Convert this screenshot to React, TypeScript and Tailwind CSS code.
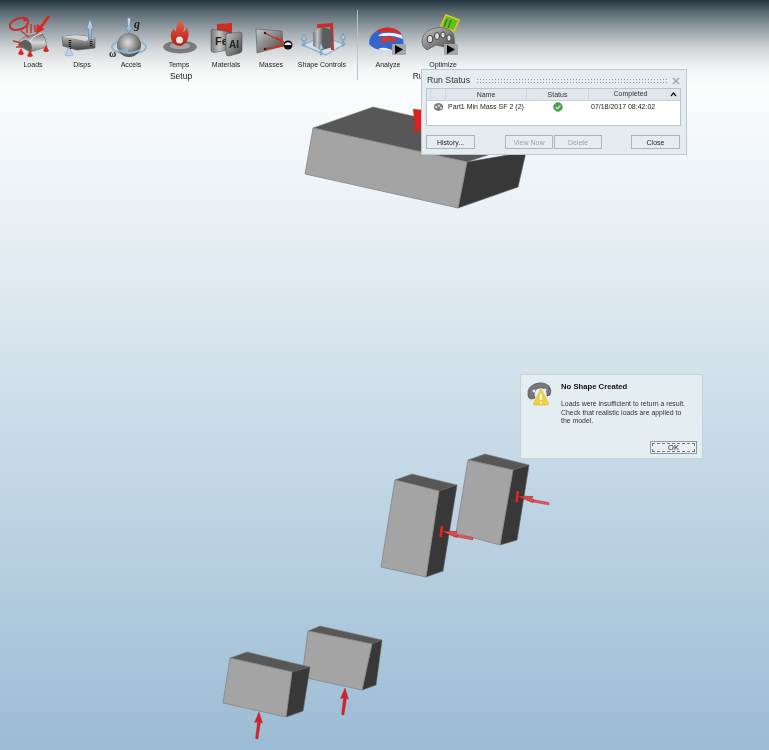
const font = "font-['Liberation_Sans',Arial,sans-serif]";

function Defs() {
  return (
    <svg width="0" height="0" className="absolute">
      <defs>
        <linearGradient id="steel" x1="0" y1="0" x2="1" y2="1">
          <stop offset="0" stopColor="#c6c6c6" />
          <stop offset="0.5" stopColor="#858585" />
          <stop offset="1" stopColor="#454545" />
        </linearGradient>
        <linearGradient id="plate" x1="0" y1="0" x2="1" y2="0">
          <stop offset="0" stopColor="#777777" />
          <stop offset="0.45" stopColor="#c2c2c2" />
          <stop offset="1" stopColor="#5c5c5c" />
        </linearGradient>
        <linearGradient id="dome" x1="0" y1="0" x2="0" y2="1">
          <stop offset="0" stopColor="#6f6f6f" />
          <stop offset="0.5" stopColor="#d6d6d6" />
          <stop offset="1" stopColor="#7c7c7c" />
        </linearGradient>
        <linearGradient id="block" x1="0" y1="0" x2="0" y2="1">
          <stop offset="0" stopColor="#c4c4c4" />
          <stop offset="0.4" stopColor="#8e8e8e" />
          <stop offset="1" stopColor="#3f3f3f" />
        </linearGradient>
        <radialGradient id="ball" cx="0.45" cy="0.4" r="0.7">
          <stop offset="0" stopColor="#e2e2e2" />
          <stop offset="0.5" stopColor="#8e8e8e" />
          <stop offset="1" stopColor="#333333" />
        </radialGradient>
        <linearGradient id="flame" x1="0" y1="0" x2="0" y2="1">
          <stop offset="0" stopColor="#e8604a" />
          <stop offset="1" stopColor="#b81a12" />
        </linearGradient>
        <linearGradient id="sky" x1="0" y1="0" x2="0" y2="1">
          <stop offset="0" stopColor="#cfe0ee" />
          <stop offset="1" stopColor="#7fa6c6" />
        </linearGradient>
      </defs>
    </svg>
  );
}

function Cone({ x, y }: { x: number; y: number }) {
  return <path d={`M${x} ${y}l-3 6q3 2 6 0z`} fill="#d8281f" />;
}

function LoadsIcon() {
  return (
    <svg width="48" height="46" viewBox="9 13 48 46">
      <path d="M18 45q1-6 6-8l18-4q4 5 5 14l-17 5z" fill="url(#dome)" stroke="#5e5e5e" strokeWidth="0.500" />
      <path d="M18 45q6-8 12-3 3 4 1 10z" fill="#5f5f5f" />
      <path d="M30 42q2-6 12-9" fill="none" stroke="#efefef" strokeWidth="1" />
      <ellipse cx="19" cy="24" rx="9.500" ry="5.500" fill="none" stroke="#c92c26" strokeWidth="2" transform="rotate(-18 19 24)" />
      <path d="M29 19l-6-3 1 6z" fill="#c92c26" />
      <path d="M48 15l2 2-8 11 3 1-9 5 1-10 3 2z" fill="#d8281f" />
      <g stroke="#cb332b" strokeWidth="1.500">
        <path d="M27 23v10M31 24v9M35 25v7M21 31l8 6M13 41l9 2M16 47l6 0" />
      </g>
      <Cone x={21} y={48} />
      <Cone x={30} y={50} />
      <Cone x={46} y={45} />
    </svg>
  );
}

function DispsIcon() {
  return (
    <svg width="50" height="46" viewBox="57 13 50 46">
      <path d="M62 37q14-4 33 1v10l-18 2-14-4z" fill="url(#block)" stroke="#4a4a4a" strokeWidth="0.500" />
      <path d="M62 37q14-4 33 1l-10 3q-10-3-23-4z" fill="#d6d6d6" />
      <path d="M70 40v9M91 39v7" stroke="#111" strokeWidth="2.500" strokeDasharray="1 1" />
      <path d="M90 19l-3.500 10h2v11h3V29h2z" fill="url(#sky)" stroke="#5a7f9d" strokeWidth="0.600" />
      <path d="M69 47l-4 8q4 2 8 0z" fill="#bcd4e8" stroke="#7fa3c4" strokeWidth="0.600" />
    </svg>
  );
}

function AccelsIcon() {
  return (
    <svg width="48" height="46" viewBox="107 13 48 46">
      <ellipse cx="129" cy="47" rx="17" ry="7" fill="none" stroke="#8fb4d0" strokeWidth="1.800" />
      <circle cx="129" cy="45" r="12" fill="url(#ball)" />
      <path d="M118 50q11 6 22 0" fill="none" stroke="#8fb4d0" strokeWidth="1.800" />
      <path d="M120 50l8-2v4z" fill="#8fb4d0" />
      <path d="M127.500 18v9h-2l3.500 7 3.500-7h-2v-9z" fill="url(#sky)" stroke="#5a7f9d" strokeWidth="0.500" />
      <text x="134" y="28" className="font-['Liberation_Serif',serif] italic font-bold" fontSize="12" fill="#222">g</text>
      <text x="109" y="57" className="font-['Liberation_Serif',serif] font-bold" fontSize="10" fill="#222">ω</text>
    </svg>
  );
}

function TempsIcon() {
  return (
    <svg width="48" height="46" viewBox="155 13 48 46">
      <ellipse cx="180" cy="47" rx="16.500" ry="6" fill="#7c7c7c" stroke="#5e5e5e" strokeWidth="0.600" />
      <ellipse cx="180" cy="46" rx="11" ry="3.800" fill="#a4a4a4" stroke="#5e5e5e" strokeWidth="0.600" />
      <path d="M180 20q6 6 3 12 3-1 3-5 4 5 2 11-1 6-8 8-8-1-9-8-1-6 3-10 0 3 2 3 0-6 4-11z" fill="url(#flame)" />
      <ellipse cx="179.500" cy="40" rx="3.500" ry="3.500" fill="#e4e4e4" />
    </svg>
  );
}

function MaterialsIcon() {
  return (
    <svg width="46" height="46" viewBox="203 13 46 46">
      <path d="M217 24l15-1v13h-15z" fill="#cc2c24" />
      <path d="M211 31q0-2 2-1.500l15 2q2 .5 2 2v16l-16 3q-3 0-3-3z" fill="url(#plate)" stroke="#444" strokeWidth="0.500" />
      <text x="215" y="45" className="font-['Liberation_Sans',sans-serif] font-bold" fontSize="11" fill="#222">Fe</text>
      <path d="M226 36q0-2 2-2.500l12-1.500q2 0 2 2v16q0 2-2 3l-11 3q-3 0-3-3z" fill="url(#steel)" stroke="#444" strokeWidth="0.500" />
      <text x="229" y="48" className="font-['Liberation_Sans',sans-serif] font-bold" fontSize="10" fill="#222">Al</text>
    </svg>
  );
}

function MassesIcon() {
  return (
    <svg width="44" height="46" viewBox="249 13 44 46">
      <path d="M256 29l26 2 1 15-26 7z" fill="url(#steel)" stroke="#444" strokeWidth="0.500" />
      <path d="M265 33l23 12M276 37l12 8M265 49l23-4M277 46l11-1" stroke="#cf2d25" strokeWidth="1.300" fill="none" />
      <circle cx="265" cy="33" r="1.200" fill="#222" />
      <circle cx="265" cy="49" r="1.200" fill="#222" />
      <circle cx="288" cy="45" r="4.500" fill="#111" />
      <path d="M284.500 45a3.600 3.600 0 0 1 7 0z" fill="#f0f0f0" />
    </svg>
  );
}

function ShapeControlsIcon() {
  return (
    <svg width="58" height="46" viewBox="293 13 58 46">
      <path d="M302 45l20-8 23 7-19 11z" fill="#d4dfe8" stroke="#8fb4d0" strokeWidth="1.400" />
      <path d="M317 24l16-1 1 27h-3l-1-23-13 1z" fill="#cc2c24" />
      <path d="M313 32l10-5v22l-1 1-9-4z" fill="url(#plate)" />
      <path d="M323 27l9 3 1 17-11 3z" fill="#5c5c5c" />
      <path d="M304 34l-2.500 6h1.700v6h1.600v-6h1.700zM343 33l-2.500 6h1.700v7h1.600v-7h1.700zM321 43l-2.500 6h1.700v6h1.600v-6h1.700z" fill="#a9c6dd" stroke="#557c9b" strokeWidth="0.500" />
    </svg>
  );
}

function PlayBadge({ x, y }: { x: number; y: number }) {
  return (
    <g>
      <rect x={x} y={y} width="14" height="11" rx="1" fill="#a6a6a6" />
      <path d={`M${x + 3} ${y + 1}l8 4.500-8 4.500z`} fill="#000" />
    </g>
  );
}

function AnalyzeIcon() {
  return (
    <svg width="48" height="46" viewBox="364 13 48 46">
      <path d="M369 44q0-8 6-12 8-6 17-4 9 2 11 10 1 5 0 9l-9 3h-13q-8-1-12-6z" fill="#3466cc" />
      <path d="M376 31q8-5 16-3 7 1.500 9.500 7-11-4-17-3-5 .5-8.500-1z" fill="#d92a22" />
      <path d="M378 36q3-3 6-3 9-1 17.500 2l1.500 4q-11-4-17-3-4 0-8 0z" fill="#eef1f6" />
      <path d="M381 37q8-1 15 1v4q-8-2-15 1z" fill="#d8352c" />
      <path d="M378 49q4-2 8-1l6 2h-11z" fill="#eef1f6" />
      <PlayBadge x={392} y={44} />
    </svg>
  );
}

function OptimizeIcon() {
  return (
    <svg width="48" height="46" viewBox="419 13 48 46">
      <path d="M446 15l13 5-5 11-13-5z" fill="#5cc028" stroke="#e2c022" strokeWidth="1.800" />
      <path d="M447 19l-3 8M451 20l-3 8" stroke="#2c7d14" strokeWidth="1.300" />
      <path d="M422 42q0-7 6-11 9-5 17-3 8 2 9 9l1 9-6 2-13-3-9 5q-5-3-5-8z" fill="url(#steel)" stroke="#4e4e4e" strokeWidth="0.600" />
      <g fill="#dedede" stroke="#2e2e2e" strokeWidth="0.900">
        <ellipse cx="430" cy="39" rx="2.800" ry="3.800" />
        <ellipse cx="437" cy="36" rx="2.500" ry="3.500" />
        <ellipse cx="443" cy="35" rx="2.200" ry="3" />
        <ellipse cx="449" cy="38" rx="2.200" ry="3.200" />
      </g>
      <PlayBadge x={444} y={44} />
    </svg>
  );
}

function ToolItem({ label, width, icon }: { label: string; width: string; icon: React.ReactNode }) {
  return (
    <div className={`flex flex-col items-center ${width}`}>
      <div className="h-[46px]">{icon}</div>
      <span className="mt-[1px] whitespace-nowrap text-[7px] leading-[10px] text-[#222]">{label}</span>
    </div>
  );
}

function Toolbar() {
  return (
    <div className="relative flex h-[85px] shrink-0 bg-[linear-gradient(180deg,#24343f_0%,#5a6972_14%,#98a2a8_35%,#d3d7d9_58%,#f2f3f4_80%,#fcfdfd_100%)] pl-[9px] pt-[13px]">
      <div className="flex flex-col items-center">
        <div className="flex">
          <ToolItem label="Loads" width="w-[48px]" icon={<LoadsIcon />} />
          <ToolItem label="Disps" width="w-[50px]" icon={<DispsIcon />} />
          <ToolItem label="Accels" width="w-[48px]" icon={<AccelsIcon />} />
          <ToolItem label="Temps" width="w-[48px]" icon={<TempsIcon />} />
          <ToolItem label="Materials" width="w-[46px]" icon={<MaterialsIcon />} />
          <ToolItem label="Masses" width="w-[44px]" icon={<MassesIcon />} />
          <ToolItem label="Shape Controls" width="w-[58px]" icon={<ShapeControlsIcon />} />
        </div>
        <span className="ml-[2px] mt-[1px] text-[8.5px] leading-[11px] text-[#222]">Setup</span>
      </div>
      <div className="ml-[6px] mt-[-3px] h-[70px] w-px bg-[#bcc3c7]" />
      <div className="ml-[6px] flex flex-col items-center">
        <div className="flex gap-[7px]">
          <ToolItem label="Analyze" width="w-[48px]" icon={<AnalyzeIcon />} />
          <ToolItem label="Optimize" width="w-[48px]" icon={<OptimizeIcon />} />
        </div>
        <span className="ml-[10px] mt-[1px] text-[8.5px] leading-[11px] text-[#222]">Run</span>
      </div>
    </div>
  );
}

type Box = { front: string; top: string; right: string };

const boxes: Box[] = [
  {
    front: "313,128 467,162 458,208 305,174",
    top: "313,128 373,107 527,142 467,162",
    right: "467,162 526,152 518,187 458,208",
  },
  {
    front: "468,460 513,470 500,545 456,533",
    top: "468,460 485,454 529,465 513,470",
    right: "513,470 529,465 517,540 500,545",
  },
  {
    front: "395,480 439,491 426,577 381,567",
    top: "395,480 412,474 457,485 439,491",
    right: "439,491 457,485 443,571 426,577",
  },
  {
    front: "308,631 372,644 362,690 302,677",
    top: "308,631 320,626 382,640 372,644",
    right: "372,644 382,640 376,685 362,690",
  },
  {
    front: "230,658 292,672 286,717 223,703",
    top: "230,658 247,652 310,667 292,672",
    right: "292,672 310,667 303,711 286,717",
  },
];

function SideArrow({ x, y }: { x: number; y: number }) {
  return (
    <g transform={`translate(${x} ${y})`}>
      <path d="M16 3.500l16 3v2.500l-16-3z" fill="#e8525a" stroke="#a8282a" strokeWidth="0.400" />
      <path d="M0 0l16 .5-1 2 2 2-1.500 2z" fill="#e2474a" stroke="#7e1c1c" strokeWidth="0.500" />
      <path d="M1 -5l-1.500 11" stroke="#ee201e" strokeWidth="2.500" />
    </g>
  );
}

function UpArrow({ x, y }: { x: number; y: number }) {
  return (
    <path
      transform={`translate(${x} ${y})`}
      d="M0 0l3.500 11-2-.5-2.500 16.500-2.500-.5 2-16.500-3 .5z"
      fill="#d2232a"
      stroke="#a81a1e"
      strokeWidth="0.300"
    />
  );
}

function Model() {
  return (
    <svg className="absolute inset-0" width="769" height="750" viewBox="0 0 769 750">
      {boxes.map((b) => (
        <g key={b.front}>
          <polygon points={b.top} fill="#575757" stroke="#7d7d7d" strokeWidth="0.600" />
          <polygon points={b.right} fill="#383838" stroke="#5c5c5c" strokeWidth="0.600" />
          <polygon points={b.front} fill="#a4a4a4" stroke="#858585" strokeWidth="0.800" />
        </g>
      ))}
      <path d="M413 109l11 1-4 18 2 3h-10l3-3z" fill="#e0201c" />
      <SideArrow x={517} y={496} />
      <SideArrow x={441} y={531} />
      <UpArrow x={259} y={712} />
      <UpArrow x={345} y={688} />
    </svg>
  );
}

function DlgButton({ label, width, disabled }: { label: string; width: string; disabled?: boolean }) {
  return (
    <button
      className={`h-[14px] border border-[#a9b4bb] bg-[#e6edf1] text-[7px] leading-none ${width} ${
        disabled ? "text-[#9aa3a8]" : "text-[#222]"
      }`}
    >
      {label}
    </button>
  );
}

function RunStatus() {
  return (
    <div className="absolute left-[421px] top-[69px] flex h-[86px] w-[266px] flex-col border border-[#bcc8cf] bg-[#e4ecf0] px-[4px]">
      <div className="flex h-[18px] items-center pt-[3px]">
        <span className="w-[49px] whitespace-nowrap pl-[1px] text-[8.7px] text-[#333]">Run Status</span>
        <div className="ml-[1px] h-[6px] w-[192px] bg-[radial-gradient(#8f9aa1_0.7px,transparent_0.9px)] bg-[length:3px_3px]" />
        <svg className="ml-[4px]" width="8" height="8" viewBox="0 0 8 8">
          <path d="M1 1l6 6M7 1l-6 6" stroke="#9aa6ad" strokeWidth="1.300" />
        </svg>
      </div>
      <div className="flex h-[38px] w-[255px] flex-col border border-[#b9c5cc] bg-white">
        <div className="flex h-[12px] items-center border-b border-[#c8d2d8] bg-[#dfe7ec] text-[7px] text-[#333]">
          <div className="h-full w-[4px] border-r border-[#cbd5db]" />
          <div className="h-full w-[15px] border-r border-[#cbd5db]" />
          <div className="h-full w-[81px] border-r border-[#cbd5db] text-center leading-[12px]">Name</div>
          <div className="h-full w-[62px] border-r border-[#cbd5db] text-center leading-[12px]">Status</div>
          <div className="flex h-full flex-1 items-center">
            <span className="flex-1 pl-[2px] text-center">Completed</span>
            <svg className="mr-[3px]" width="7" height="5" viewBox="0 0 7 5">
              <path d="M1 4l2.500-3 2.500 3" stroke="#111" strokeWidth="1.200" fill="none" />
            </svg>
          </div>
        </div>
        <div className="flex h-[12px] items-center text-[7px] text-[#222]">
          <svg className="ml-[6px] mt-[-1px] shrink-0" width="11" height="10" viewBox="0 0 12 10">
            <ellipse cx="6" cy="5" rx="5.200" ry="4.300" fill="#7e7e7e" />
            <circle cx="3.500" cy="5" r="1.200" fill="#eee" />
            <circle cx="6.500" cy="3.500" r="1" fill="#eee" />
            <circle cx="8.500" cy="6" r="1" fill="#eee" />
          </svg>
          <span className="ml-[4px] w-[105px] whitespace-nowrap">Part1 Min Mass SF 2 (2)</span>
          <svg className="shrink-0" width="10" height="10" viewBox="0 0 10 10">
            <circle cx="5" cy="5" r="4.400" fill="#4ea24a" stroke="#3a7f38" strokeWidth="0.500" />
            <path d="M2.800 5.200l1.600 1.600 3-3.300" stroke="#fff" strokeWidth="1.100" fill="none" />
          </svg>
          <span className="ml-[28px] whitespace-nowrap">07/18/2017 08:42:02</span>
        </div>
      </div>
      <div className="mt-[9px] flex">
        <DlgButton label="History..." width="w-[49px]" />
        <DlgButton label="View Now" width="ml-[30px] w-[48px]" disabled />
        <DlgButton label="Delete" width="ml-[1px] w-[48px]" disabled />
        <DlgButton label="Close" width="ml-[29px] w-[49px]" />
      </div>
    </div>
  );
}

function NoShape() {
  return (
    <div className="absolute left-[520px] top-[374px] flex h-[85px] w-[183px] flex-col border border-[#c5d2da] bg-[#e4edf2] pl-[6px] pr-[5px] pt-[6px]">
      <div className="flex">
        <svg width="25" height="25" viewBox="0 0 25 25" className="shrink-0">
          <path d="M1 14q-1-8 7-11 8-3 14 2 3 4 1 9l-3 1q1-6-4-8-6-1-8 3-2 3 0 7l-4 1q-3-1-3-4z" fill="#787878" stroke="#333" strokeWidth="0.600" />
          <circle cx="7" cy="10" r="1.500" fill="#eee" />
          <circle cx="18" cy="9" r="1.500" fill="#eee" />
          <path d="M14 8l7.500 14.500q0 1.500-1 1.500H7.500q-1 0-1-1.500z" fill="#f2cf3c" stroke="#d5aa1f" strokeWidth="0.500" />
          <path d="M14 13v6" stroke="#fff" strokeWidth="1.800" />
          <circle cx="14" cy="21.500" r="1" fill="#fff" />
        </svg>
        <div className="ml-[9px] flex-1">
          <div className="mt-[1px] text-[7.7px] font-bold leading-[10px] text-[#111]">No Shape Created</div>
          <p className="mt-[8px] w-[128px] text-[6.9px] leading-[8.700px] text-[#333]">
            Loads were insufficient to return a result. Check that realistic loads are applied to the model.
          </p>
        </div>
      </div>
      <div className="mb-[4px] mt-auto flex justify-end">
        <button className="h-[13px] w-[47px] border border-[#8f999f] bg-[#e9eff3] p-[1px] text-[7.5px] leading-none text-[#222]">
          <span className="flex h-full items-center justify-center border border-dashed border-[#777]">OK</span>
        </button>
      </div>
    </div>
  );
}

export default function App() {
  return (
    <div className={`relative flex h-[750px] w-[769px] flex-col overflow-hidden blur-[0.35px] ${font}`}>
      <Defs />
      <Toolbar />
      <div className="flex-1 bg-[linear-gradient(180deg,#fcfdfd_0%,#9bbcd4_100%)]" />
      <Model />
      <RunStatus />
      <NoShape />
    </div>
  );
}
